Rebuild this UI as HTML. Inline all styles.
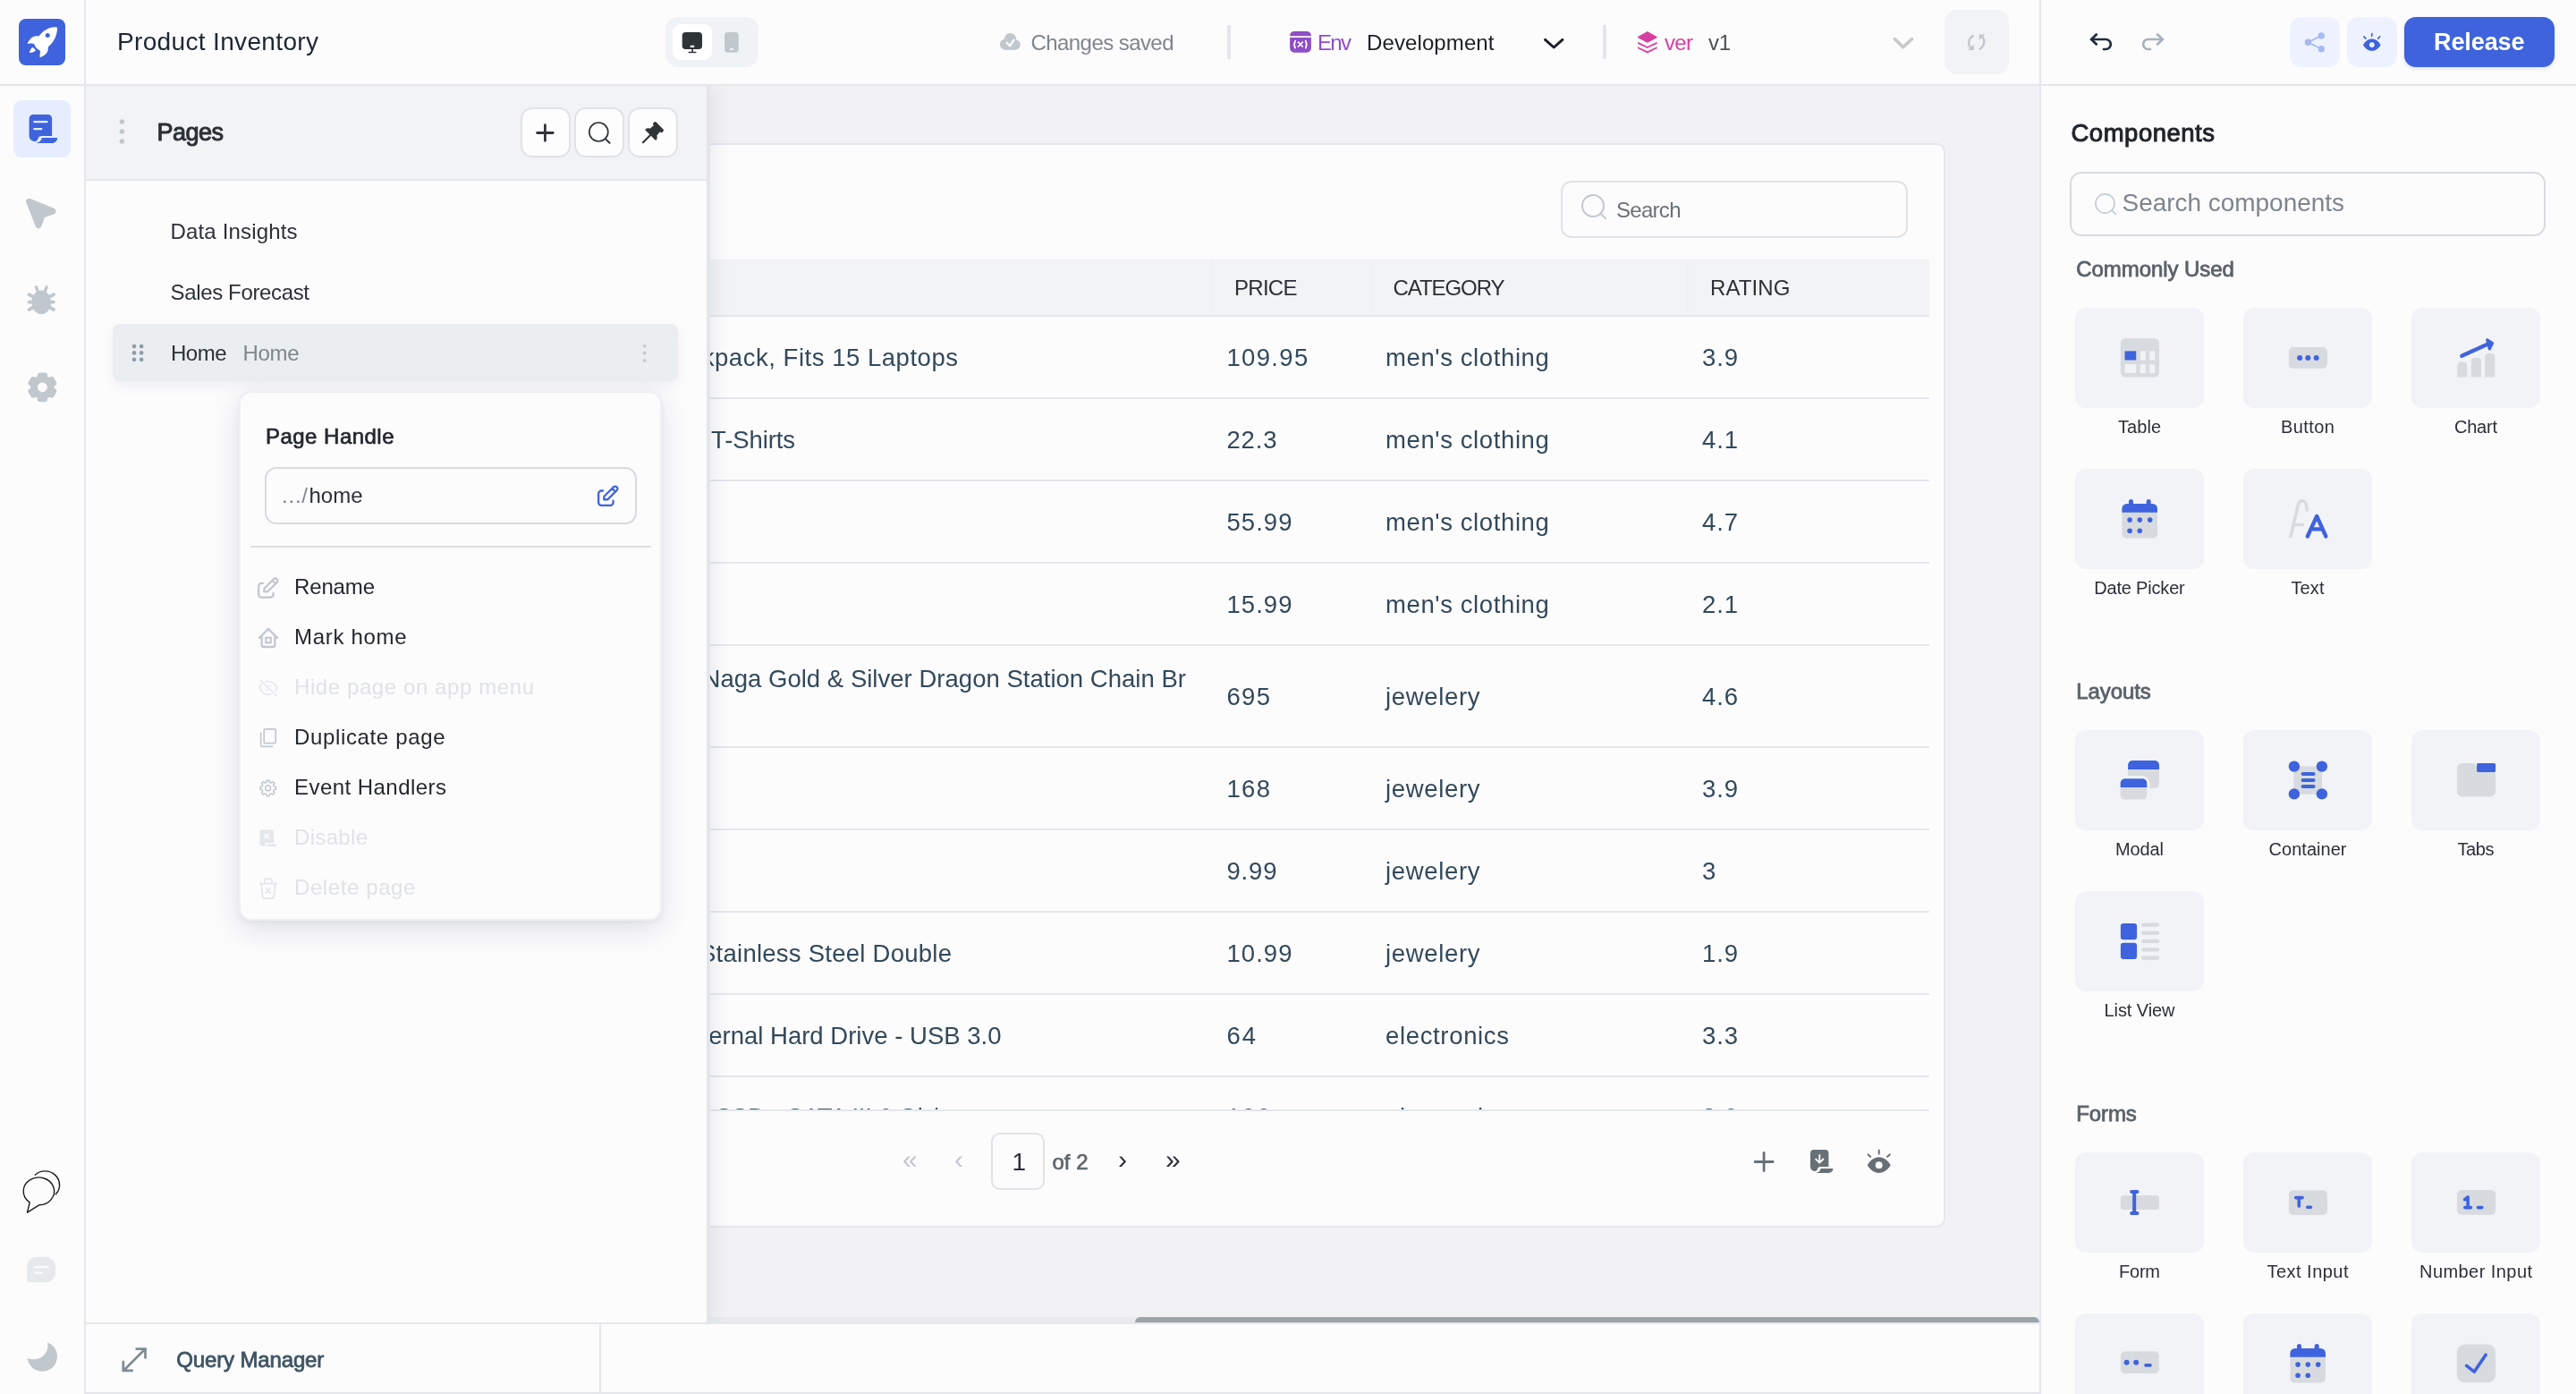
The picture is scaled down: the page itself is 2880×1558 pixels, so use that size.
<!DOCTYPE html>
<html lang="en"><head><meta charset="utf-8"><title>Product Inventory</title>
<style>
*{box-sizing:border-box;margin:0;padding:0}
html,body{overflow:hidden;background:#FCFCFD;font-family:"Liberation Sans", sans-serif;}
#root{position:relative;width:2880px;height:1558px;overflow:hidden;will-change:transform}
#root div,#root svg,#root span.t{position:absolute}
.t{white-space:nowrap;line-height:1;display:block}
</style></head>
<body><div id="root">
<div style="left:96px;top:96px;width:2184px;height:1382px;background:#F2F2F5;"></div>
<div style="left:600px;top:160px;width:1575px;height:1212px;background:#FCFCFD;border:2px solid #E4E7EB;border-radius:10px;"></div>
<div style="left:1745px;top:202px;width:388px;height:64px;border:2px solid #DFE3E6;border-radius:12px;background:#FCFCFD;"></div>
<svg style="left:1766px;top:215px;" width="32" height="32" viewBox="0 0 32 32" fill="none"><circle cx="15" cy="15" r="12" stroke="#C4CCD2" stroke-width="2.2"/><path d="M23.5 23.5L29 29" stroke="#C4CCD2" stroke-width="2.2" stroke-linecap="round"/></svg>
<span class="t" style="left:1807.00px;top:222.68px;font-size:24px;color:#6A7177;letter-spacing:-0.709px;">Search</span>
<div style="left:600px;top:290px;width:1557px;height:62px;background:#F1F3F5;"></div>
<div style="left:600px;top:352px;width:1557px;height:2px;background:#E4E7EB;"></div>
<div style="left:1354px;top:290px;width:2px;height:62px;background:#EEF0F3;"></div>
<div style="left:1532px;top:290px;width:2px;height:62px;background:#EEF0F3;"></div>
<div style="left:1886px;top:290px;width:2px;height:62px;background:#EEF0F3;"></div>
<span class="t" style="left:1380.00px;top:309.68px;font-size:24px;color:#2B3036;letter-spacing:-0.715px;">PRICE</span>
<span class="t" style="left:1557.50px;top:309.68px;font-size:24px;color:#2B3036;letter-spacing:-1.067px;">CATEGORY</span>
<span class="t" style="left:1912.00px;top:309.68px;font-size:24px;color:#2B3036;letter-spacing:0.122px;">RATING</span>
<div style="left:600px;top:444px;width:1557px;height:2px;background:#E4E7EB;"></div>
<span class="t" style="left:386.22px;top:385.72px;font-size:27.5px;color:#33495A;letter-spacing:0.530px;">Fjallraven - Foldsack No. 1 Backpack, Fits 15 Laptops</span>
<span class="t" style="left:1371.50px;top:385.72px;font-size:27.5px;color:#33495A;letter-spacing:1.315px;">109.95</span>
<span class="t" style="left:1549.00px;top:385.72px;font-size:27.5px;color:#33495A;letter-spacing:0.605px;">men's clothing</span>
<span class="t" style="left:1903.00px;top:385.72px;font-size:27.5px;color:#33495A;letter-spacing:0.883px;">3.9</span>
<div style="left:600px;top:536px;width:1557px;height:2px;background:#E4E7EB;"></div>
<span class="t" style="left:413.45px;top:477.72px;font-size:27.5px;color:#33495A;letter-spacing:-0.105px;">Mens Casual Premium Slim Fit T-Shirts</span>
<span class="t" style="left:1371.50px;top:477.72px;font-size:27.5px;color:#33495A;letter-spacing:0.823px;">22.3</span>
<span class="t" style="left:1549.00px;top:477.72px;font-size:27.5px;color:#33495A;letter-spacing:0.605px;">men's clothing</span>
<span class="t" style="left:1903.00px;top:477.72px;font-size:27.5px;color:#33495A;letter-spacing:0.883px;">4.1</span>
<div style="left:600px;top:628px;width:1557px;height:2px;background:#E4E7EB;"></div>
<span class="t" style="left:260.00px;top:569.72px;font-size:27.5px;color:#33495A;letter-spacing:-0.178px;">Mens Cotton Jacket</span>
<span class="t" style="left:1371.50px;top:569.72px;font-size:27.5px;color:#33495A;letter-spacing:1.043px;">55.99</span>
<span class="t" style="left:1549.00px;top:569.72px;font-size:27.5px;color:#33495A;letter-spacing:0.605px;">men's clothing</span>
<span class="t" style="left:1903.00px;top:569.72px;font-size:27.5px;color:#33495A;letter-spacing:0.883px;">4.7</span>
<div style="left:600px;top:720px;width:1557px;height:2px;background:#E4E7EB;"></div>
<span class="t" style="left:265.00px;top:661.72px;font-size:27.5px;color:#33495A;letter-spacing:-0.252px;">Mens Casual Slim Fit</span>
<span class="t" style="left:1371.50px;top:661.72px;font-size:27.5px;color:#33495A;letter-spacing:1.043px;">15.99</span>
<span class="t" style="left:1549.00px;top:661.72px;font-size:27.5px;color:#33495A;letter-spacing:0.605px;">men's clothing</span>
<span class="t" style="left:1903.00px;top:661.72px;font-size:27.5px;color:#33495A;letter-spacing:0.883px;">2.1</span>
<div style="left:600px;top:834px;width:1557px;height:2px;background:#E4E7EB;"></div>
<span class="t" style="left:1371.50px;top:764.72px;font-size:27.5px;color:#33495A;letter-spacing:1.305px;">695</span>
<span class="t" style="left:1549.00px;top:764.72px;font-size:27.5px;color:#33495A;letter-spacing:0.661px;">jewelery</span>
<span class="t" style="left:1903.00px;top:764.72px;font-size:27.5px;color:#33495A;letter-spacing:0.883px;">4.6</span>
<div style="left:600px;top:926px;width:1557px;height:2px;background:#E4E7EB;"></div>
<span class="t" style="left:265.00px;top:867.72px;font-size:27.5px;color:#33495A;letter-spacing:-0.167px;">Solid Gold Petite Micropave</span>
<span class="t" style="left:1371.50px;top:867.72px;font-size:27.5px;color:#33495A;letter-spacing:1.305px;">168</span>
<span class="t" style="left:1549.00px;top:867.72px;font-size:27.5px;color:#33495A;letter-spacing:0.661px;">jewelery</span>
<span class="t" style="left:1903.00px;top:867.72px;font-size:27.5px;color:#33495A;letter-spacing:0.883px;">3.9</span>
<div style="left:600px;top:1018px;width:1557px;height:2px;background:#E4E7EB;"></div>
<span class="t" style="left:260.00px;top:959.72px;font-size:27.5px;color:#33495A;letter-spacing:-0.189px;">White Gold Plated Princess</span>
<span class="t" style="left:1371.50px;top:959.72px;font-size:27.5px;color:#33495A;letter-spacing:0.823px;">9.99</span>
<span class="t" style="left:1549.00px;top:959.72px;font-size:27.5px;color:#33495A;letter-spacing:0.661px;">jewelery</span>
<span class="t" style="left:1903.00px;top:959.72px;font-size:27.5px;color:#33495A;letter-spacing:-1.297px;">3</span>
<div style="left:600px;top:1110px;width:1557px;height:2px;background:#E4E7EB;"></div>
<span class="t" style="left:395.63px;top:1051.72px;font-size:27.5px;color:#33495A;letter-spacing:0.252px;">Pierced Owl Rose Gold Plated Stainless Steel Double</span>
<span class="t" style="left:1371.50px;top:1051.72px;font-size:27.5px;color:#33495A;letter-spacing:1.043px;">10.99</span>
<span class="t" style="left:1549.00px;top:1051.72px;font-size:27.5px;color:#33495A;letter-spacing:0.661px;">jewelery</span>
<span class="t" style="left:1903.00px;top:1051.72px;font-size:27.5px;color:#33495A;letter-spacing:0.883px;">1.9</span>
<div style="left:600px;top:1202px;width:1557px;height:2px;background:#E4E7EB;"></div>
<span class="t" style="left:408.31px;top:1143.72px;font-size:27.5px;color:#33495A;letter-spacing:0.010px;">WD 2TB Elements Portable External Hard Drive - USB 3.0</span>
<span class="t" style="left:1371.50px;top:1143.72px;font-size:27.5px;color:#33495A;letter-spacing:1.906px;">64</span>
<span class="t" style="left:1549.00px;top:1143.72px;font-size:27.5px;color:#33495A;letter-spacing:0.655px;">electronics</span>
<span class="t" style="left:1903.00px;top:1143.72px;font-size:27.5px;color:#33495A;letter-spacing:0.883px;">3.3</span>
<span class="t" style="left:402.62px;top:744.72px;font-size:27.5px;color:#33495A;letter-spacing:0.022px;">John Hardy Women's Legends Naga Gold &amp; Silver Dragon Station Chain Br</span>
<div style="left:600px;top:1204px;width:1557px;height:36px;overflow:hidden;"><span class="t" style="left:-204.52px;top:30.72px;font-size:27.5px;color:#33495A;letter-spacing:-0.221px;">SanDisk SSD PLUS 1TB Internal SSD - SATA III 6 Gb/s</span><span class="t" style="left:771.50px;top:30.72px;font-size:27.5px;color:#33495A;letter-spacing:1.555px;">109</span><span class="t" style="left:949.00px;top:30.72px;font-size:27.5px;color:#33495A;letter-spacing:0.655px;">electronics</span><span class="t" style="left:1303.00px;top:30.72px;font-size:27.5px;color:#33495A;letter-spacing:0.883px;">2.9</span></div>
<div style="left:600px;top:1240px;width:1557px;height:2px;background:#E4E7EB;"></div>
<span class="t" style="left:1009.00px;top:1280.61px;font-size:30px;color:#C1C8CD;letter-spacing:-3.688px;">«</span>
<span class="t" style="left:1067.00px;top:1280.61px;font-size:30px;color:#C1C8CD;letter-spacing:-2.000px;">‹</span>
<div style="left:1108px;top:1266px;width:60px;height:64px;border:2px solid #DFE3E6;border-radius:10px;background:#FCFCFD;"></div>
<span class="t" style="left:1131.50px;top:1285.30px;font-size:28px;color:#2B3036;letter-spacing:-2.578px;">1</span>
<span class="t" style="left:1176.50px;top:1286.68px;font-size:24px;color:#5F666D;-webkit-text-stroke:0.7px #5F666D;letter-spacing:-0.010px;">of 2</span>
<span class="t" style="left:1250.00px;top:1280.61px;font-size:30px;color:#2B3036;letter-spacing:-2.000px;">›</span>
<span class="t" style="left:1303.00px;top:1280.61px;font-size:30px;color:#2B3036;letter-spacing:-3.688px;">»</span>
<svg style="left:1958px;top:1284px;" width="28" height="29" viewBox="1958 1284 28 29" fill="none"><path stroke="#687076" stroke-width="2.800" stroke-linecap="round" d="M1962.100 1298.500h20M1972.100 1288.500v20"/></svg>
<svg style="left:2020px;top:1282px;" width="34" height="32" viewBox="2020 1282 34 32" fill="none"><path fill="#687076" d="M2027.800 1285.100h12.800a3.800 3.800 0 0 1 3.800 3.800v15.200h-9.200c-1.800 0-2.700.9-3.200 2.500-.5 1.800-1.800 2.600-3.500 2.300-2.300-.4-4.500-1.800-4.500-4.700v-15.300a3.800 3.800 0 0 1 3.800-3.800z"/><path fill="#687076" d="M2035.700 1306.100h13.800c-.4 3-2.200 4.900-5 4.900h-14.200c2.900-.4 4.700-2 5.400-4.900z"/><path stroke="#FCFCFD" stroke-width="1.800" stroke-linecap="round" stroke-linejoin="round" fill="none" d="M2034.300 1290.800v8.400M2030.200 1295.500l4.100 4 4.100-4"/></svg>
<svg style="left:2084px;top:1282px;" width="34" height="32" viewBox="2084 1282 34 32" fill="none"><path fill="#687076" d="M2087.800 1302.200c3-5.400 7.500-8.900 12.900-8.900s9.900 3.500 13 8.900c-3.100 5.300-7.600 8.700-13 8.700s-9.900-3.400-12.900-8.700z"/><circle cx="2100.700" cy="1302.200" r="3.900" fill="#FCFCFD"/><path stroke="#687076" stroke-width="2" stroke-linecap="round" d="M2100.700 1285.600v3.800M2088.600 1290.400l2.700 2.400M2112.800 1290.400l-2.700 2.400"/></svg>
<div style="left:794px;top:1472px;width:1486px;height:7px;background:#E9EBEE;"></div>
<div style="left:1269px;top:1472px;width:1011px;height:7px;background:#9BA3AB;border-radius:6px 6px 0 0;"></div>
<div style="left:96px;top:96px;width:698px;height:1382px;background:#FCFCFD;border-right:4px solid #E2E6EA;box-shadow:6px 0 18px rgba(30,40,60,0.07);"></div>
<div style="left:96px;top:96px;width:694px;height:104px;background:#F1F3F5;"></div>
<div style="left:96px;top:200px;width:694px;height:2px;background:#E4E7EB;"></div>
<svg style="left:130px;top:130px;" width="12" height="34" viewBox="130 130 12 34" fill="none"><circle cx="136.300" cy="135.9" r="2.750" fill="#C1C8CD"/><circle cx="136.300" cy="147" r="2.750" fill="#C1C8CD"/><circle cx="136.300" cy="158.1" r="2.750" fill="#C1C8CD"/></svg>
<span class="t" style="left:175.50px;top:135.14px;font-size:27px;color:#2B3036;-webkit-text-stroke:1px #2B3036;letter-spacing:-0.516px;">Pages</span>
<div style="left:582px;top:120px;width:56px;height:56px;background:#FDFDFE;border:2px solid #DFE3E6;border-radius:13px;"></div>
<div style="left:642px;top:120px;width:56px;height:56px;background:#FDFDFE;border:2px solid #DFE3E6;border-radius:13px;"></div>
<div style="left:702px;top:120px;width:56px;height:56px;background:#FDFDFE;border:2px solid #DFE3E6;border-radius:13px;"></div>
<svg style="left:596px;top:134px;" width="28" height="28" viewBox="596 134 28 28" fill="none"><path stroke="#2F3437" stroke-width="2.800" stroke-linecap="round" d="M600.600 148.500h17.600M609.400 139.700v17.600"/></svg>
<svg style="left:654px;top:132px;" width="32" height="32" viewBox="654 132 32 32" fill="none"><circle cx="669.300" cy="147.500" r="10.500" stroke="#2F3437" stroke-width="1.700"/><path stroke="#2F3437" stroke-width="2" stroke-linecap="round" d="M677.300 155.600l4.300 4.200"/></svg>
<svg style="left:714px;top:132px;" width="32" height="32" viewBox="714 132 32 32" fill="none"><g transform="translate(731.600 146.500) rotate(45) scale(1.12)"><path fill="#2F3437" d="M-5 -7.500h10a1.400 1.400 0 0 1 1.400 1.400v1.200a1.400 1.400 0 0 1 -1.400 1.400h-.6l.5 5.000c1.500.6 2.500 1.700 2.700 3.200a1 1 0 0 1 -1 1.100h-13.200a1 1 0 0 1 -1-1.100c.2-1.500 1.200-2.600 2.700-3.200l.5-5.000h-.6a1.400 1.400 0 0 1 -1.400-1.400v-1.200a1.400 1.400 0 0 1 1.400-1.400z"/><path stroke="#2F3437" stroke-width="1.900" stroke-linecap="round" d="M0 5v11"/></g></svg>
<span class="t" style="left:190.50px;top:246.68px;font-size:24px;color:#2B3036;letter-spacing:0.160px;">Data Insights</span>
<span class="t" style="left:190.50px;top:314.68px;font-size:24px;color:#2B3036;letter-spacing:-0.352px;">Sales Forecast</span>
<div style="left:126px;top:362px;width:632px;height:64px;background:#EBEEF1;border-radius:8px;box-shadow:0 6px 14px rgba(30,40,60,0.06);"></div>
<svg style="left:144px;top:380px;" width="20" height="28" viewBox="144 380 20 28" fill="none"><circle cx="150" cy="387.1" r="2.350" fill="#8E9DAB"/><circle cx="158.1" cy="387.1" r="2.350" fill="#8E9DAB"/><circle cx="150" cy="394.45" r="2.350" fill="#8E9DAB"/><circle cx="158.1" cy="394.45" r="2.350" fill="#8E9DAB"/><circle cx="150" cy="401.8" r="2.350" fill="#8E9DAB"/><circle cx="158.1" cy="401.8" r="2.350" fill="#8E9DAB"/></svg>
<span class="t" style="left:191.00px;top:382.68px;font-size:24px;color:#2B3036;letter-spacing:-0.510px;">Home</span>
<span class="t" style="left:271.50px;top:382.68px;font-size:24px;color:#7E868C;letter-spacing:-0.344px;">Home</span>
<svg style="left:714px;top:380px;" width="14" height="30" viewBox="714 380 14 30" fill="none"><circle cx="720.700" cy="386.6" r="1.900" fill="#C1C8CD"/><circle cx="720.700" cy="394.7" r="1.900" fill="#C1C8CD"/><circle cx="720.700" cy="402.8" r="1.900" fill="#C1C8CD"/></svg>
<div style="left:267px;top:437px;width:473px;height:592px;background:#FCFCFD;border-radius:14px;border:2px solid #EEF0F3;box-shadow:0 10px 32px rgba(30,40,60,0.13),0 2px 6px rgba(30,40,60,0.05);"></div>
<span class="t" style="left:297.00px;top:475.68px;font-size:24px;color:#23282D;-webkit-text-stroke:0.7px #23282D;letter-spacing:0.472px;">Page Handle</span>
<div style="left:296px;top:522px;width:416px;height:64px;border:2px solid #D7DBDF;border-radius:13px;background:#FCFCFD;"></div>
<span class="t" style="left:315.00px;top:541.68px;font-size:24px;color:#7E868C;letter-spacing:0.776px;">.../</span>
<span class="t" style="left:345.50px;top:541.68px;font-size:24px;color:#2B3036;letter-spacing:-0.016px;">home</span>
<div style="left:280px;top:610px;width:448px;height:2px;background:#DCE0E4;"></div>
<span class="t" style="left:329.00px;top:643.68px;font-size:24px;color:#23282D;letter-spacing:-0.144px;">Rename</span>
<span class="t" style="left:329.00px;top:699.68px;font-size:24px;color:#23282D;letter-spacing:0.682px;">Mark home</span>
<span class="t" style="left:329.00px;top:755.68px;font-size:24px;color:#DFE3E6;letter-spacing:0.590px;">Hide page on app menu</span>
<span class="t" style="left:329.00px;top:811.68px;font-size:24px;color:#23282D;letter-spacing:0.644px;">Duplicate page</span>
<span class="t" style="left:329.00px;top:867.68px;font-size:24px;color:#23282D;letter-spacing:0.454px;">Event Handlers</span>
<span class="t" style="left:329.00px;top:923.68px;font-size:24px;color:#DFE3E6;letter-spacing:0.326px;">Disable</span>
<span class="t" style="left:329.00px;top:979.68px;font-size:24px;color:#DFE3E6;letter-spacing:0.596px;">Delete page</span>
<svg style="left:664px;top:540px;" width="32" height="30" viewBox="664 540 32 30" fill="none"><path stroke="#3E63DD" stroke-width="2.300" stroke-linecap="round" stroke-linejoin="round" fill="none" d="M674 548.500h-1.500a3.400 3.400 0 0 0 -3.400 3.400v9.600a3.400 3.400 0 0 0 3.400 3.400h9.700a3.400 3.400 0 0 0 3.400-3.400v-1.800"/><path stroke="#3E63DD" stroke-width="2.300" stroke-linejoin="round" fill="none" d="M675.200 558.300l.3-3.600 10.500-10.400a2.400 2.400 0 0 1 3.400 0l.3.300a2.400 2.400 0 0 1 0 3.400l-10.500 10.400zM684.400 546l3.600 3.600"/></svg>
<svg style="left:284px;top:642px;" width="32" height="30" viewBox="284 642 32 30" fill="none"><path stroke="#C1C8CD" stroke-width="2.300" stroke-linecap="round" stroke-linejoin="round" fill="none" d="M294 651.800h-1.500a3.400 3.400 0 0 0 -3.400 3.400v9.000a3.400 3.400 0 0 0 3.400 3.400h9.700a3.400 3.400 0 0 0 3.400-3.400v-1.200"/><path stroke="#C1C8CD" stroke-width="2.300" stroke-linejoin="round" fill="none" d="M295.200 661.200l.3-3.600 10.500-10.400a2.400 2.400 0 0 1 3.400 0l.3.300a2.400 2.400 0 0 1 0 3.400l-10.500 10.400zM304.400 648.900l3.600 3.600"/></svg>
<svg style="left:284px;top:698px;" width="32" height="30" viewBox="284 698 32 30" fill="none"><path stroke="#C1C8CD" stroke-width="2.300" stroke-linecap="round" stroke-linejoin="round" fill="none" d="M289.900 713l10.100-10.100 10.100 10.100M292.600 711.500v9.200a2.300 2.300 0 0 0 2.300 2.300h10.200a2.300 2.300 0 0 0 2.300-2.300v-9.200"/><rect x="297.200" y="712.700" width="5.600" height="5.600" stroke="#C1C8CD" stroke-width="2" fill="none"/></svg>
<svg style="left:284px;top:754px;" width="32" height="30" viewBox="284 754 32 30" fill="none"><path stroke="#E4E8EB" stroke-width="1.700" fill="none" d="M290 768.800c2.500-4.600 6-7.300 10-7.300s7.500 2.700 10 7.300c-2.500 4.600-6 7.300-10 7.300s-7.500-2.700-10-7.300z"/><circle cx="300" cy="768.800" r="2.600" stroke="#E4E8EB" stroke-width="1.600" fill="none"/><path stroke="#FCFCFD" stroke-width="5" d="M290.600 760l19 18" stroke-linecap="round"/><path stroke="#E4E8EB" stroke-width="1.700" stroke-linecap="round" d="M290.600 760l19 18"/></svg>
<svg style="left:286px;top:810px;" width="28" height="30" viewBox="286 810 28 30" fill="none"><rect x="295.200" y="814.800" width="13" height="15.800" rx="1.400" stroke="#C1C8CD" stroke-width="1.700" fill="none"/><path stroke="#C1C8CD" stroke-width="1.700" stroke-linecap="round" stroke-linejoin="round" fill="none" d="M291.600 819.300v13.300a1.800 1.800 0 0 0 1.800 1.800h10.800"/></svg>
<svg style="left:288px;top:869px;" width="24" height="24" viewBox="288 869 24 24" fill="none"><path d="M298.19 872.13L301.21 872.13L301.41 874.21L303.22 874.97L304.84 873.63L306.97 875.76L305.63 877.38L306.39 879.19L308.47 879.39L308.47 882.41L306.39 882.61L305.63 884.42L306.97 886.04L304.84 888.17L303.22 886.83L301.41 887.59L301.21 889.67L298.19 889.67L297.99 887.59L296.18 886.83L294.56 888.17L292.43 886.04L293.77 884.42L293.01 882.61L290.93 882.41L290.93 879.39L293.01 879.19L293.77 877.38L292.43 875.76L294.56 873.63L296.18 874.97L297.99 874.21z" stroke="#C1C8CD" stroke-width="1.500" stroke-linejoin="round" fill="none"/><circle cx="299.700" cy="880.900" r="2.900" stroke="#C1C8CD" stroke-width="1.500" fill="none"/></svg>
<svg style="left:286px;top:924px;" width="28" height="26" viewBox="286 924 28 26" fill="none"><path fill="#E4E8EB" d="M293.300 927.200h9.700a3 3 0 0 1 3 3v11.800h-7c-1.400 0-2.100.7-2.500 1.900-.4 1.400-1.400 2-2.700 1.800-1.800-.3-3.500-1.400-3.500-3.700v-11.800a3 3 0 0 1 3-3z"/><path fill="#E4E8EB" d="M299.300 943.200h10.400c-.3 1.800-1.500 2.900-3.400 2.900h-10.300c1.800-.4 2.800-1.300 3.300-2.900z"/><path stroke="#FCFCFD" stroke-width="1.500" stroke-linecap="round" d="M296 932.200l4.400 4.400M300.400 932.200l-4.400 4.400"/></svg>
<svg style="left:286px;top:978px;" width="28" height="30" viewBox="286 978 28 30" fill="none"><path stroke="#E4E8EB" stroke-width="1.900" stroke-linecap="round" stroke-linejoin="round" fill="none" d="M290.500 987.600h19M296 987.300v-3a2 2 0 0 1 2-2h4a2 2 0 0 1 2 2v3M292.300 988l1.400 13.800a2.400 2.400 0 0 0 2.400 2.200h7.800a2.400 2.400 0 0 0 2.400-2.200l1.400-13.800M297.700 993.200l4.600 4.600M302.300 993.200l-4.600 4.600"/></svg>
<div style="left:96px;top:1478px;width:2184px;height:80px;background:#FCFCFD;border-top:2px solid #E4E7EB;border-bottom:2px solid #E4E7EB;"></div>
<div style="left:670px;top:1480px;width:2px;height:78px;background:#E4E7EB;"></div>
<span class="t" style="left:197.30px;top:1507.68px;font-size:24px;color:#3E5463;-webkit-text-stroke:0.8px #3E5463;letter-spacing:-0.146px;">Query Manager</span>
<svg style="left:132px;top:1502px;" width="36" height="34" viewBox="132 1502 36 34" fill="none"><path stroke="#7E8B93" stroke-width="2.700" stroke-linecap="butt" stroke-linejoin="miter" fill="none" d="M139.500 1530.500l21.500-21.500M151.500 1507.600h11v11M137.800 1520.800v11h11"/></svg>
<div style="left:0px;top:0px;width:96px;height:1558px;background:#FCFCFD;border-right:2px solid #E4E7EB;"></div>
<div style="left:21px;top:21px;width:52px;height:52px;background:#3E63DD;border-radius:8px;"></div>
<div style="left:15px;top:112px;width:64px;height:64px;background:#E6EDFE;border-radius:9px;"></div>
<svg style="left:21px;top:21px;" width="52" height="52" viewBox="21 21 52 52" fill="none"><path fill="#fff" d="M63.3 30.4c-4-.6-9.6.9-14 4.2-2.300 1.700-4.200 3.700-5.900 5.900-2.500-.5-5.600 0-7.800 1.500-1.900 1.300-3.500 3.700-4.700 6.100-.2.500.2 1 .7.900 2.300-.4 4.700-.7 6.700.2.300 1.500 1.100 3.000 2.300 4.400 1.200 1.300 2.600 2.300 4.100 2.900.5 2.100.1 4.500-.4 6.600-.1.600.4 1.000.9.800 2.400-.9 4.800-2.200 6.300-3.900 1.800-2.100 2.600-5.000 2.300-7.600 2.200-1.700 4.100-3.700 5.700-6.100 3.100-4.700 4.600-10.800 4.600-15.100 0-.400-.3-.700-.8-.800z"/><circle cx="53.2" cy="39.4" r="2.5" fill="#3E63DD"/><path fill="#fff" d="M36.200 52.700c1.500.800 2.900 2.200 3.700 3.700-1.500 1.300-4.300 2.300-6.300 2.700-.4.100-.7-.3-.6-.7.500-2.000 1.700-4.300 3.200-5.700z"/></svg>
<svg style="left:28px;top:124px;" width="40" height="40" viewBox="28 124 40 40" fill="none"><path fill="#3E63DD" d="M37.200 128h16.300a4.600 4.600 0 0 1 4.600 4.600v19.400h-11.600c-2.200 0-3.400 1.100-4 3.100-.7 2.300-2.300 3.300-4.400 2.900-2.800-.5-5.500-2.300-5.500-5.900v-19.500a4.600 4.600 0 0 1 4.600-4.600z"/><path fill="#3E63DD" d="M46.900 154h17.400c-.4 3.600-2.700 6-6.300 6h-18c3.700-.5 6-2.500 6.900-6z"/><path stroke="#E6EDFE" stroke-width="2.300" stroke-linecap="round" d="M38.300 136.200h14.200M38.300 144.200h8"/></svg>
<svg style="left:26px;top:218px;" width="42" height="42" viewBox="26 218 42 42" fill="none"><path fill="#C1C8CD" stroke="#C1C8CD" stroke-width="7" stroke-linejoin="round" d="M32.6 225.200L59 236.100L47.200 240.300L43 251.800z"/></svg>
<svg style="left:26px;top:314px;" width="42" height="42" viewBox="26 314 42 42" fill="none"><ellipse cx="46.200" cy="337.800" rx="10.800" ry="13.300" fill="#C1C8CD"/><path stroke="#C1C8CD" stroke-width="3.500" stroke-linecap="round" d="M42 325.500l-1.600-4.700M50.400 325.500l1.600-4.700"/><path stroke="#C1C8CD" stroke-width="3.900" stroke-linecap="round" d="M37.500 331.800l-5-2.600M55 331.800l5-2.600M36 337.600h-3.500M56.400 337.600h3.500M37.500 343.300l-5 2.600M55 343.300l5 2.600"/></svg>
<svg style="left:26px;top:412px;" width="42" height="42" viewBox="26 412 42 42" fill="none"><g fill="#C1C8CD"><circle cx="47.400" cy="432.800" r="13.400"/><rect x="-5.600" y="-16.400" width="11.200" height="16.400" rx="3.200" transform="translate(47.400 432.800) rotate(0)"/><rect x="-5.600" y="-16.400" width="11.200" height="16.400" rx="3.200" transform="translate(47.400 432.800) rotate(60)"/><rect x="-5.600" y="-16.400" width="11.200" height="16.400" rx="3.200" transform="translate(47.400 432.800) rotate(120)"/><rect x="-5.600" y="-16.400" width="11.200" height="16.400" rx="3.200" transform="translate(47.400 432.800) rotate(180)"/><rect x="-5.600" y="-16.400" width="11.200" height="16.400" rx="3.200" transform="translate(47.400 432.800) rotate(240)"/><rect x="-5.600" y="-16.400" width="11.200" height="16.400" rx="3.200" transform="translate(47.400 432.800) rotate(300)"/></g><circle cx="47.400" cy="432.800" r="5.400" fill="#FCFCFD"/></svg>
<svg style="left:20px;top:1304px;" width="56" height="56" viewBox="20 1304 56 56" fill="none"><path stroke="#1B1B1B" stroke-width="1.400" fill="none" stroke-linejoin="round" d="M38.900 1313.500a15.500 14.800 0 1 1 23.000 21.700"/><path stroke="#1B1B1B" stroke-width="1.400" fill="none" stroke-linejoin="round" d="M33.200 1343.800a17.200 15.400 0 1 1 10.400 3.000l-13.100 8.400z"/></svg>
<svg style="left:26px;top:1400px;" width="42" height="38" viewBox="26 1400 42 38" fill="none"><path fill="#E6E9EC" d="M41.500 1404.700h9.200a11.500 11.500 0 0 1 11.500 11.500v5.600a11.500 11.500 0 0 1 -11.500 11.500h-17.600a3 3 0 0 1 -3-3v-14.100a11.500 11.500 0 0 1 11.400-11.500z"/><path stroke="#FCFCFD" stroke-width="2.200" stroke-linecap="round" d="M39 1416.100h14.700M39 1422.500h7.700"/></svg>
<svg style="left:26px;top:1494px;" width="42" height="44" viewBox="26 1494 42 44" fill="none"><circle cx="47.300" cy="1516.100" r="16.700" fill="#C1C8CD"/><circle cx="37.600" cy="1503.400" r="15.900" fill="#FCFCFD"/></svg>
<div style="left:96px;top:0px;width:2784px;height:94px;background:#FCFCFD;"></div>
<div style="left:0px;top:94px;width:2880px;height:2px;background:#E4E7EB;"></div>
<span class="t" style="left:131.00px;top:33.30px;font-size:28px;color:#1B2733;letter-spacing:0.347px;">Product Inventory</span>
<div style="left:744px;top:19px;width:104px;height:56px;background:#F0F3F6;border-radius:14px;"></div>
<div style="left:752px;top:27px;width:44px;height:40px;background:#FFFFFF;border-radius:9px;"></div>
<span class="t" style="left:1152.50px;top:35.68px;font-size:24px;color:#7E868C;letter-spacing:-0.565px;">Changes saved</span>
<div style="left:1372px;top:28px;width:4px;height:38px;background:#E2E6EA;"></div>
<span class="t" style="left:1473.00px;top:35.68px;font-size:24px;color:#8E4EC6;letter-spacing:-1.680px;">Env</span>
<span class="t" style="left:1528.00px;top:35.68px;font-size:24px;color:#1B1F24;letter-spacing:0.108px;">Development</span>
<div style="left:1792px;top:28px;width:4px;height:38px;background:#E2E6EA;"></div>
<span class="t" style="left:1861.00px;top:35.68px;font-size:24px;color:#D6409F;letter-spacing:-0.672px;">ver</span>
<span class="t" style="left:1910.00px;top:35.68px;font-size:24px;color:#4C5155;letter-spacing:-0.359px;">v1</span>
<div style="left:2174px;top:11px;width:72px;height:72px;background:#F1F3F5;border-radius:14px;"></div>
<svg style="left:758px;top:32px;" width="32" height="32" viewBox="758 32 32 32" fill="none"><rect x="762.700" y="36" width="22.300" height="19" rx="3.800" fill="#2F3437"/><rect x="771.800" y="50.700" width="4.400" height="2.400" rx=".5" fill="#fff"/><path stroke="#2F3437" stroke-width="1.600" d="M774.100 55v3.600" /><path stroke="#2F3437" stroke-width="1.500" stroke-linecap="round" d="M770.200 58.500h7.600"/></svg>
<svg style="left:806px;top:32px;" width="24" height="32" viewBox="806 32 24 32" fill="none"><rect x="810" y="36" width="15.700" height="22.700" rx="3.800" fill="#C1C8CD"/><rect x="816" y="54" width="4" height="2.100" rx=".5" fill="#F0F3F6"/></svg>
<svg style="left:1114px;top:33px;" width="32" height="27" viewBox="1114 33 32 27" fill="none"><g fill="#C1C8CD"><circle cx="1129.500" cy="43.600" r="6.600"/><circle cx="1124.100" cy="49.600" r="6.200"/><circle cx="1135" cy="50" r="5.800"/><rect x="1124" y="46" width="11" height="9.800"/></g><path stroke="#FCFCFD" stroke-width="2.300" stroke-linecap="round" stroke-linejoin="round" fill="none" d="M1125.600 47.800l3.600 3.500 4.300-6.600"/></svg>
<svg style="left:1440px;top:33px;" width="28" height="28" viewBox="1440 33 28 28" fill="none"><path fill="#8E4EC6" d="M1447.100 34.900h13.800a5 5 0 0 1 5 5v.3h-23.800v-.3a5 5 0 0 1 5-5z"/><path fill="#8E4EC6" d="M1442.100 42h23.800v11.800a5 5 0 0 1 -5 5h-13.800a5 5 0 0 1 -5-5z"/><path stroke="#fff" stroke-width="1.700" stroke-linecap="round" fill="none" d="M1448.100 45.600q-2 4 0 8M1459.700 45.600q2 4 0 8M1451.500 47.200l4.800 4.800M1456.300 47.200l-4.800 4.800"/></svg>
<svg style="left:1720px;top:38px;" width="34" height="22" viewBox="1720 38 34 22" fill="none"><path stroke="#1B1F24" stroke-width="3" stroke-linecap="round" stroke-linejoin="round" fill="none" d="M1727.500 44.400l9.700 8.600 9.700-8.600"/></svg>
<svg style="left:1828px;top:33px;" width="28" height="28" viewBox="1828 33 28 28" fill="none"><path fill="#D6409F" stroke="#D6409F" stroke-width="1.200" stroke-linejoin="round" d="M1841.800 35.700l10.300 5.900-10.300 5.500-10.200-5.500z"/><path stroke="#D6409F" stroke-width="1.900" stroke-linecap="round" stroke-linejoin="round" fill="none" d="M1831.800 48.200l10 4.800 10.200-4.800M1831.800 53.500l10 4.800 10.200-4.800"/></svg>
<svg style="left:2112px;top:38px;" width="32" height="22" viewBox="2112 38 32 22" fill="none"><path stroke="#C7C9CB" stroke-width="3.600" stroke-linecap="round" stroke-linejoin="round" fill="none" d="M2118.400 43.600l9.300 9.200 9.800-9.200"/></svg>
<svg style="left:2196px;top:34px;" width="28" height="26" viewBox="2196 34 28 26" fill="none"><path stroke="#C1C8CD" stroke-width="2.400" stroke-linecap="round" fill="none" d="M2205.900 39.900c-5.500 3.600-6 10-2.500 13.800M2213.600 54.700c5.500-3.700 6-10 2.400-13.900"/><path fill="#C1C8CD" d="M2206.800 49.800v6.300h-6.700zM2212.700 44.800v-6.300h6.700z"/></svg>
<div style="left:2280px;top:0px;width:600px;height:1558px;background:#FCFCFD;border-left:2px solid #E4E7EB;"></div>
<div style="left:2280px;top:94px;width:600px;height:2px;background:#E4E7EB;"></div>
<div style="left:2560px;top:19px;width:56px;height:56px;background:#EDF2FE;border-radius:13px;"></div>
<div style="left:2624px;top:19px;width:56px;height:56px;background:#EDF2FE;border-radius:13px;"></div>
<div style="left:2688px;top:19px;width:168px;height:56px;background:#3E63DD;border-radius:13px;box-shadow:0 2px 4px rgba(30,40,80,0.12);"></div>
<span class="t" style="left:2721.00px;top:34.14px;font-size:27px;color:#FFFFFF;font-weight:700;letter-spacing:-0.099px;">Release</span>
<svg style="left:2332px;top:32px;" width="34" height="28" viewBox="2332 32 34 28" fill="none"><path stroke="#1F2D3D" stroke-width="2.700" fill="none" stroke-linejoin="miter" d="M2344.600 37.700l-6.500 6.300 6.500 6.300"/><path stroke="#1F2D3D" stroke-width="2.700" fill="none" stroke-linecap="round" d="M2338.600 44h15.700a5.500 5.500 0 0 1 0 11h-2.300"/></svg>
<svg style="left:2390px;top:32px;" width="34" height="28" viewBox="2390 32 34 28" fill="none"><path stroke="#A9B1BA" stroke-width="2.700" fill="none" d="M2411.300 37.700l6.500 6.300-6.500 6.300"/><path stroke="#A9B1BA" stroke-width="2.700" fill="none" stroke-linecap="round" d="M2417.300 44h-15.700a5.500 5.500 0 0 0 0 11h2.300"/></svg>
<svg style="left:2572px;top:32px;" width="32" height="30" viewBox="2572 32 32 30" fill="none"><g fill="#A9B9F0"><circle cx="2580.500" cy="47.200" r="3.700"/><circle cx="2595.300" cy="39.900" r="3.700"/><circle cx="2595.300" cy="54.700" r="3.700"/></g><path stroke="#A9B9F0" stroke-width="1.800" d="M2595.300 39.900l-14.800 7.300 14.800 7.500" fill="none"/></svg>
<svg style="left:2638px;top:34px;" width="28" height="26" viewBox="2638 34 28 26" fill="none"><path fill="#3E63DD" d="M2642 50.200c2.300-4 5.700-6.700 9.800-6.700s7.500 2.700 9.800 6.700c-2.300 4-5.700 6.600-9.800 6.600s-7.500-2.600-9.800-6.600z"/><circle cx="2651.800" cy="50.100" r="2.900" fill="#EDF2FE"/><path stroke="#3E63DD" stroke-width="1.600" stroke-linecap="round" d="M2651.900 37.500l-.3 3M2642.900 40.900l2 2.200M2660.700 40.900l-2 2.200"/></svg>
<span class="t" style="left:2315.50px;top:134.72px;font-size:27.5px;color:#1F2428;-webkit-text-stroke:1px #1F2428;letter-spacing:0.507px;">Components</span>
<div style="left:2314px;top:192px;width:532px;height:72px;border:2px solid #D7DBDF;border-radius:13px;background:#FCFCFD;"></div>
<svg style="left:2340px;top:214px;" width="30" height="30" viewBox="0 0 30 30" fill="none"><circle cx="13.5" cy="13.5" r="10.6" stroke="#C4CDD3" stroke-width="1.7"/><path d="M21.2 21.4L25.4 25.400" stroke="#C4CDD3" stroke-width="1.7" stroke-linecap="round"/></svg>
<span class="t" style="left:2372.50px;top:213.30px;font-size:28px;color:#7E868C;letter-spacing:-0.034px;">Search components</span>
<span class="t" style="left:2321.30px;top:288.68px;font-size:24px;color:#5A6269;-webkit-text-stroke:0.8px #5A6269;letter-spacing:-0.074px;">Commonly Used</span>
<span class="t" style="left:2321.30px;top:760.68px;font-size:24px;color:#5A6269;-webkit-text-stroke:0.8px #5A6269;letter-spacing:-0.094px;">Layouts</span>
<span class="t" style="left:2321.30px;top:1232.68px;font-size:24px;color:#5A6269;-webkit-text-stroke:0.8px #5A6269;letter-spacing:-0.125px;">Forms</span>
<div style="left:2320px;top:344px;width:144px;height:112px;background:#F2F3F6;border-radius:12px;"></div>
<span class="t" style="left:2368.00px;top:467.07px;font-size:20px;color:#2B3036;letter-spacing:0.047px;">Table</span>
<div style="left:2508px;top:344px;width:144px;height:112px;background:#F2F3F6;border-radius:12px;"></div>
<span class="t" style="left:2550.00px;top:467.07px;font-size:20px;color:#2B3036;letter-spacing:0.434px;">Button</span>
<div style="left:2696px;top:344px;width:144px;height:112px;background:#F2F3F6;border-radius:12px;"></div>
<span class="t" style="left:2744.00px;top:467.07px;font-size:20px;color:#2B3036;letter-spacing:-0.227px;">Chart</span>
<div style="left:2320px;top:524px;width:144px;height:112px;background:#F2F3F6;border-radius:12px;"></div>
<span class="t" style="left:2341.25px;top:647.07px;font-size:20px;color:#2B3036;letter-spacing:-0.188px;">Date Picker</span>
<div style="left:2508px;top:524px;width:144px;height:112px;background:#F2F3F6;border-radius:12px;"></div>
<span class="t" style="left:2561.50px;top:647.07px;font-size:20px;color:#2B3036;letter-spacing:0.104px;">Text</span>
<div style="left:2320px;top:816px;width:144px;height:112px;background:#F2F3F6;border-radius:12px;"></div>
<span class="t" style="left:2365.00px;top:939.07px;font-size:20px;color:#2B3036;letter-spacing:-0.121px;">Modal</span>
<div style="left:2508px;top:816px;width:144px;height:112px;background:#F2F3F6;border-radius:12px;"></div>
<span class="t" style="left:2536.50px;top:939.07px;font-size:20px;color:#2B3036;letter-spacing:0.035px;">Container</span>
<div style="left:2696px;top:816px;width:144px;height:112px;background:#F2F3F6;border-radius:12px;"></div>
<span class="t" style="left:2747.50px;top:939.07px;font-size:20px;color:#2B3036;letter-spacing:-0.417px;">Tabs</span>
<div style="left:2320px;top:996px;width:144px;height:112px;background:#F2F3F6;border-radius:12px;"></div>
<span class="t" style="left:2352.50px;top:1119.07px;font-size:20px;color:#2B3036;letter-spacing:-0.084px;">List View</span>
<div style="left:2320px;top:1288px;width:144px;height:112px;background:#F2F3F6;border-radius:12px;"></div>
<span class="t" style="left:2369.00px;top:1411.07px;font-size:20px;color:#2B3036;letter-spacing:-0.224px;">Form</span>
<div style="left:2508px;top:1288px;width:144px;height:112px;background:#F2F3F6;border-radius:12px;"></div>
<span class="t" style="left:2534.50px;top:1411.07px;font-size:20px;color:#2B3036;letter-spacing:0.476px;">Text Input</span>
<div style="left:2696px;top:1288px;width:144px;height:112px;background:#F2F3F6;border-radius:12px;"></div>
<span class="t" style="left:2705.00px;top:1411.07px;font-size:20px;color:#2B3036;letter-spacing:0.439px;">Number Input</span>
<div style="left:2320px;top:1468px;width:144px;height:112px;background:#F2F3F6;border-radius:12px;"></div>
<div style="left:2508px;top:1468px;width:144px;height:112px;background:#F2F3F6;border-radius:12px;"></div>
<div style="left:2696px;top:1468px;width:144px;height:112px;background:#F2F3F6;border-radius:12px;"></div>
<svg style="left:2368px;top:376px;" width="48" height="48" viewBox="-24 -24 48 48" fill="none"><rect x="-21.100" y="-21.800" width="43.100" height="43.400" rx="5.200" fill="#D7DBDF"/><rect x="-16.500" y="-7.600" width="12.700" height="10.100" fill="#3E63DD"/><g fill="#F2F3F6"><rect x="0.800" y="-7.600" width="5.900" height="10.100"/><rect x="11.400" y="-7.600" width="5.700" height="10.100"/><rect x="-16.500" y="7.100" width="12.700" height="9.800"/><rect x="0.800" y="7.100" width="5.900" height="9.800"/><rect x="11.400" y="7.100" width="5.700" height="9.800"/></g></svg>
<svg style="left:2556px;top:376px;" width="48" height="48" viewBox="-24 -24 48 48" fill="none"><rect x="-21.100" y="-12" width="43.100" height="23.800" rx="4.800" fill="#D7DBDF"/><g fill="#3E63DD"><circle cx="-8.900" cy="0" r="3"/><circle cx="0.300" cy="0" r="3"/><circle cx="9.700" cy="0" r="3"/></g></svg>
<svg style="left:2744px;top:376px;" width="48" height="48" viewBox="-24 -24 48 48" fill="none"><g fill="#D7DBDF"><path d="M-20.700 21.400v-12.800a4.100 4.100 0 0 1 4.100-4.100h2.800a4.100 4.100 0 0 1 4.100 4.100v12.800z"/><path d="M-5.200 21.400v-17.300a4.100 4.100 0 0 1 4.100-4.100h3a4.100 4.100 0 0 1 4.100 4.100v17.300z"/><path d="M10.200 21.400v-22.300a4.100 4.100 0 0 1 4.100-4.100h2.900a4.100 4.100 0 0 1 4.100 4.100v22.300z"/></g><path stroke="#3E63DD" stroke-width="4.300" stroke-linecap="round" d="M-15.700 -2.200l28.700-13"/><path fill="#3E63DD" stroke="#3E63DD" stroke-width="3" stroke-linejoin="round" d="M12.600 -20.300l6 3.900-3.300 6.400z"/></svg>
<svg style="left:2368px;top:556px;" width="48" height="48" viewBox="-24 -24 48 48" fill="none"><path fill="#D7DBDF" d="M-19.600 -7.500h39.600v24.400a4.500 4.500 0 0 1 -4.500 4.500h-30.600a4.500 4.500 0 0 1 -4.500-4.500z"/><path fill="#3E63DD" d="M-14.100 -17.100h28.600a5.500 5.500 0 0 1 5.500 5.500v4.300h-39.600v-4.300a5.500 5.500 0 0 1 5.500-5.500z"/><path stroke="#3E63DD" stroke-width="5" stroke-linecap="round" d="M-9.500 -19.400v4M10.200 -19.400v4"/><g fill="#3E63DD"><circle cx="-10.900" cy="1.100" r="2.800"/><circle cx="0.300" cy="1.100" r="2.800"/><circle cx="11.700" cy="1.100" r="2.800"/><circle cx="-10.900" cy="13.300" r="2.800"/><circle cx="0.300" cy="13.300" r="2.800"/></g></svg>
<svg style="left:2556px;top:1500px;" width="48" height="48" viewBox="-24 -24 48 48" fill="none"><path fill="#D7DBDF" d="M-19.600 -7.500h39.600v24.400a4.500 4.500 0 0 1 -4.500 4.500h-30.600a4.500 4.500 0 0 1 -4.500-4.500z"/><path fill="#3E63DD" d="M-14.100 -17.100h28.600a5.500 5.500 0 0 1 5.500 5.500v4.300h-39.600v-4.300a5.500 5.500 0 0 1 5.500-5.500z"/><path stroke="#3E63DD" stroke-width="5" stroke-linecap="round" d="M-9.500 -19.400v4M10.200 -19.400v4"/><g fill="#3E63DD"><circle cx="-10.900" cy="1.100" r="2.800"/><circle cx="0.300" cy="1.100" r="2.800"/><circle cx="11.700" cy="1.100" r="2.800"/><circle cx="-10.900" cy="13.300" r="2.800"/><circle cx="0.300" cy="13.300" r="2.800"/></g></svg>
<svg style="left:2556px;top:556px;" width="48" height="48" viewBox="-24 -24 48 48" fill="none"><path stroke="#D7DBDF" stroke-width="3.500" stroke-linecap="round" stroke-linejoin="round" fill="none" d="M-19 19.600l8.400-35.600c.8-3.300 2.700-4.500 4.800-4.300 2.500.3 3.900 2.300 4.300 5l.8 5.500M-14 6.600h8.500"/><path stroke="#3E63DD" stroke-width="4.300" stroke-linecap="round" stroke-linejoin="round" fill="none" d="M-0.200 19.500l10.400-22.500 10.200 22.500M4.200 11.300h12"/></svg>
<svg style="left:2368px;top:848px;" width="48" height="48" viewBox="-24 -24 48 48" fill="none"><path fill="#D7DBDF" d="M-12.900 -12.200h34.900v16.200a5 5 0 0 1 -5 5h-24.900a5 5 0 0 1 -5-5z"/><path fill="#3E63DD" d="M-7.900 -21.900h24.900a5 5 0 0 1 5 5v4.800h-34.900v-4.800a5 5 0 0 1 5-5z"/><rect x="-24.300" y="-4.700" width="35.600" height="29.300" rx="8" fill="#F2F3F6"/><path fill="#D7DBDF" d="M-21.300 7.800h29.600v8.800a5 5 0 0 1 -5 5h-19.600a5 5 0 0 1 -5-5z"/><path fill="#3E63DD" d="M-16.300 -1.700h19.600a5 5 0 0 1 5 5v4.600h-29.600v-4.600a5 5 0 0 1 5-5z"/></svg>
<svg style="left:2556px;top:848px;" width="48" height="48" viewBox="-24 -24 48 48" fill="none"><rect x="-15.600" y="-15.600" width="31.600" height="31.400" fill="#D7DBDF"/><g fill="#3E63DD"><circle cx="-15.100" cy="-15.400" r="6.200"/><circle cx="15.900" cy="-15.400" r="6.200"/><circle cx="-15.100" cy="15.400" r="6.200"/><circle cx="15.900" cy="15.400" r="6.200"/></g><path stroke="#3E63DD" stroke-width="4" stroke-linecap="round" d="M-5.400 -7h12M-5.400 0h12M-5.400 7h12"/></svg>
<svg style="left:2744px;top:848px;" width="48" height="48" viewBox="-24 -24 48 48" fill="none"><path fill="#D7DBDF" d="M-15.100 -19h12.100c2 0 2.900 1 3.400 2.800l1.500 5.200c.4 1.300 1 1.900 2.500 1.900h17.700v21.600a6 6 0 0 1 -6 6h-31.200a6 6 0 0 1 -6-6v-25.500a6 6 0 0 1 6-6z"/><rect x="1.100" y="-19" width="21" height="9.900" rx="1.600" fill="#3E63DD"/></svg>
<svg style="left:2368px;top:1028px;" width="48" height="48" viewBox="-24 -24 48 48" fill="none"><g fill="#3E63DD"><rect x="-21.100" y="-20" width="18.200" height="18.300" rx="3.200"/><rect x="-21.100" y="1.700" width="18.200" height="18.300" rx="3.200"/></g><g fill="#D7DBDF"><rect x="2.100" y="-20.6" width="20" height="4.400" rx="2.200"/><rect x="2.100" y="-11.4" width="20" height="4.400" rx="2.200"/><rect x="2.100" y="-2.3" width="20" height="4.400" rx="2.200"/><rect x="2.100" y="7.2" width="20" height="4.400" rx="2.200"/><rect x="2.100" y="16.3" width="20" height="4.400" rx="2.200"/></g></svg>
<svg style="left:2368px;top:1320px;" width="48" height="48" viewBox="-24 -24 48 48" fill="none"><rect x="-21.100" y="-7.900" width="43.100" height="15.800" rx="3" fill="#D7DBDF"/><path stroke="#3E63DD" stroke-width="4" stroke-linecap="round" d="M-5.800 -12v24M-8.800 -12.100h6.300M-8.800 12.100h6.300"/></svg>
<svg style="left:2556px;top:1320px;" width="48" height="48" viewBox="-24 -24 48 48" fill="none"><rect x="-21.100" y="-13.800" width="43.100" height="27.700" rx="5" fill="#D7DBDF"/><path stroke="#3E63DD" stroke-width="3.600" stroke-linecap="round" d="M-13.300 -5.400h7.400M-9.700 -5.400v9.500M-0.200 5.200h3.700"/></svg>
<svg style="left:2744px;top:1320px;" width="48" height="48" viewBox="-24 -24 48 48" fill="none"><rect x="-21.100" y="-13.900" width="43.200" height="27.700" rx="5" fill="#D7DBDF"/><path stroke="#3E63DD" stroke-width="3.600" stroke-linecap="round" stroke-linejoin="round" fill="none" d="M-12.400 -3.300l3.500-2.700v11.600M-12.200 5.600h6.600M2.500 5.600h4.300"/></svg>
<svg style="left:2368px;top:1500px;" width="48" height="48" viewBox="-24 -24 48 48" fill="none"><rect x="-21.100" y="-13.700" width="43" height="24.800" rx="4.800" fill="#D7DBDF"/><g fill="#3E63DD"><circle cx="-14.400" cy="-1.300" r="3"/><circle cx="-3.800" cy="-1.300" r="3"/></g><path stroke="#3E63DD" stroke-width="3.600" stroke-linecap="round" d="M7 1.900h5"/></svg>
<svg style="left:2744px;top:1500px;" width="48" height="48" viewBox="-24 -24 48 48" fill="none"><rect x="-21.200" y="-21.500" width="43.200" height="42.800" rx="9" fill="#D7DBDF"/><path stroke="#3E63DD" stroke-width="3.600" stroke-linecap="round" stroke-linejoin="round" fill="none" d="M-10.400 2.300l8.600 6.900 12.900-19"/></svg>
</div>
<script>(function(){var w=window.innerWidth||0;if(w>200&&Math.abs(w-2880)>2){document.getElementById("root").style.zoom=(w/2880);}})();</script>
</body></html>
